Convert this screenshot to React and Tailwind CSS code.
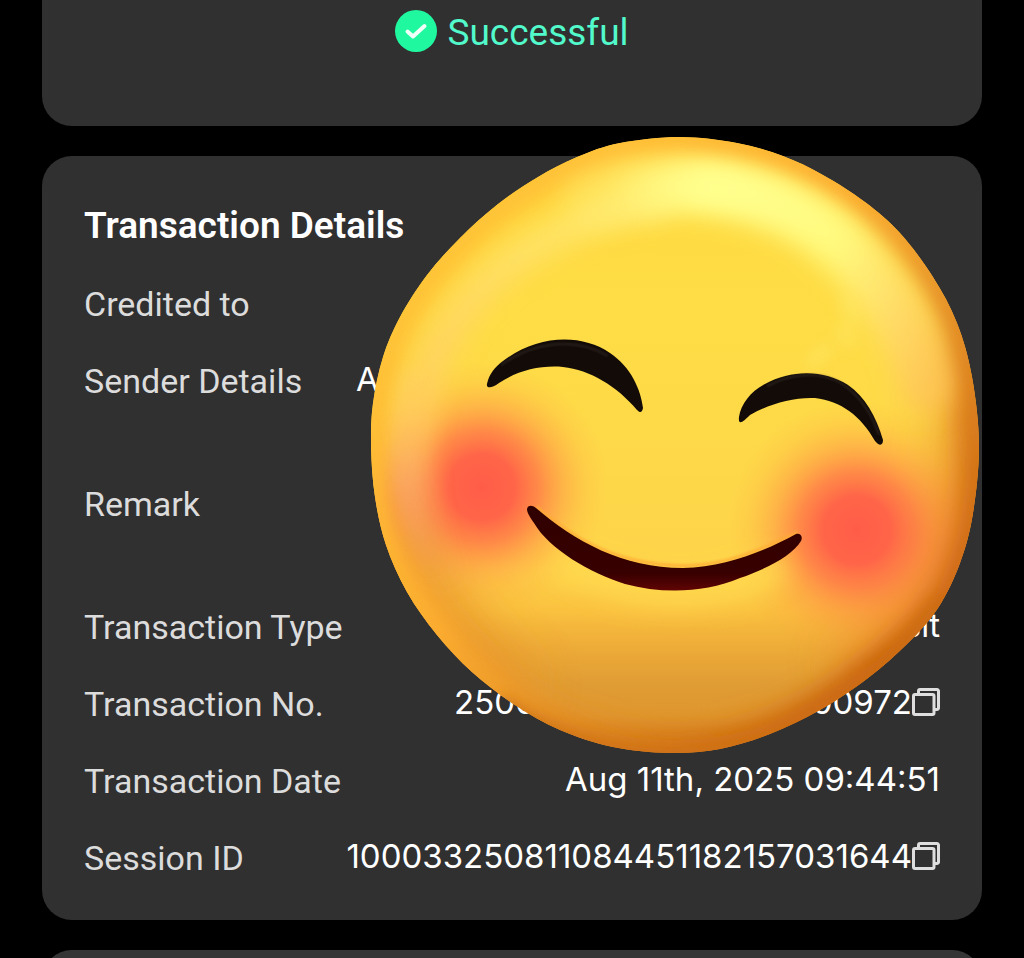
import React from 'react';

/* ---------- data ---------- */
const rows = [
  { label: 'Credited to', value: '' },
  { label: 'Sender Details', value: 'A', tall: true, wide: true },
  { label: 'Remark', value: '', tall: true },
  { label: 'Transaction Type', value: 'Deposit' },
  { label: 'Transaction No.', parts: ['2500', '00972'], copy: true },
  { label: 'Transaction Date', value: 'Aug 11th, 2025 09:44:51' },
  { label: 'Session ID', value: '100033250811084451182157031644', copy: true },
];

/* ---------- icons ---------- */
function CheckBadge() {
  return (
    <svg className="size-[42px]" viewBox="0 0 42 42" fill="none" aria-hidden="true">
      <circle cx="21" cy="21" r="21" fill="#20f8a0" />
      <path d="M12.5 21.5l5.5 5L29.500 16" stroke="#f0fff8" strokeWidth="4" strokeLinecap="round" strokeLinejoin="round" />
    </svg>
  );
}

function CopyIcon() {
  return (
    <svg className="size-7" viewBox="0 0 28 28" fill="none" stroke="#dedede" strokeWidth="3" strokeLinejoin="round" aria-hidden="true">
      <rect x="1.500" y="6.500" width="20.500" height="20" rx="1.500" />
      <path d="M6.500 6.500V3a1.500 1.500 0 0 1 1.500-1.500H25A1.500 1.500 0 0 1 26.500 3v17A1.500 1.500 0 0 1 25 21.500h-3" />
    </svg>
  );
}

/* ---------- sticker ---------- */
const outline = [
  [680, 137], [737, 143], [783, 156], [823, 175], [865, 202], [900, 233], [933, 277], [957, 323],
  [972, 377], [979, 445], [973, 513], [960, 563], [938, 608], [908, 643], [868, 678], [820, 710],
  [770, 734], [720, 749], [670, 753], [613, 747], [560, 730], [515, 705], [472, 672], [437, 635],
  [407, 592], [386, 545], [375, 497], [371, 447], [373, 403], [383, 357], [400, 317], [427, 275],
  [460, 238], [498, 204], [538, 177], [577, 157], [620, 143],
];

// closed smooth curve through the points
const smooth = (pts) => {
  const n = pts.length;
  const at = (i) => pts[(i + n) % n];
  let d = `M${pts[0].join(' ')}`;
  for (let i = 0; i < n; i++) {
    const [a, b, c, e] = [at(i - 1), at(i), at(i + 1), at(i + 2)];
    d += `C${b[0] + (c[0] - a[0]) / 6} ${b[1] + (c[1] - a[1]) / 6} ${c[0] - (e[0] - b[0]) / 6} ${c[1] - (e[1] - b[1]) / 6} ${c[0]} ${c[1]}`;
  }
  return d + 'Z';
};

const FACE = smooth(outline);

function Blur({ id, size }) {
  return (
    <filter id={id} filterUnits="userSpaceOnUse" x="271" y="36" width="808" height="818">
      <feGaussianBlur stdDeviation={size} />
    </filter>
  );
}

function SmileSticker() {
  return (
    <svg className="absolute -top-5 right-[3px] w-[608px] h-[618px]" viewBox="371 136 608 618" role="img" aria-label="Smiling face">
      <defs>
        <clipPath id="face"><path d={FACE} /></clipPath>
        <linearGradient id="base" x1="0" y1="0" x2="0" y2="1">
          <stop offset="0" stopColor="#ffd93f" />
          <stop offset="0.3" stopColor="#fedd46" />
          <stop offset="0.7" stopColor="#fed44a" />
          <stop offset="0.77" stopColor="#fac03f" />
          <stop offset="0.83" stopColor="#edab38" />
          <stop offset="0.89" stopColor="#e09c34" />
          <stop offset="0.94" stopColor="#df962e" />
          <stop offset="1" stopColor="#d07815" />
        </linearGradient>
        <linearGradient id="rim" x1="0.1" y1="0.2" x2="0.85" y2="0.9">
          <stop offset="0" stopColor="#ffc439" />
          <stop offset="0.4" stopColor="#fdae30" />
          <stop offset="0.6" stopColor="#ea972a" />
          <stop offset="1" stopColor="#c8620f" />
        </linearGradient>
        <radialGradient id="cheek">
          <stop offset="0" stopColor="#ff5c48" />
          <stop offset="0.26" stopColor="#ff5f48" stopOpacity="0.95" />
          <stop offset="0.45" stopColor="#ff6d47" stopOpacity="0.72" />
          <stop offset="0.64" stopColor="#ff8044" stopOpacity="0.4" />
          <stop offset="0.83" stopColor="#ff9640" stopOpacity="0.15" />
          <stop offset="1" stopColor="#ffa040" stopOpacity="0" />
        </radialGradient>
        <linearGradient id="gloss" gradientUnits="userSpaceOnUse" x1="560" y1="200" x2="940" y2="370">
          <stop offset="0" stopColor="#ffe468" stopOpacity="0.4" />
          <stop offset="0.3" stopColor="#ffff8c" />
          <stop offset="0.65" stopColor="#fff97c" />
          <stop offset="0.85" stopColor="#ffdb66" />
          <stop offset="1" stopColor="#ffc458" stopOpacity="0.8" />
        </linearGradient>
        <linearGradient id="shine" gradientUnits="userSpaceOnUse" x1="610" y1="0" x2="870" y2="0">
          <stop offset="0" stopColor="#ffff8e" stopOpacity="0" />
          <stop offset="0.4" stopColor="#ffff8e" />
          <stop offset="1" stopColor="#ffff8e" stopOpacity="0" />
        </linearGradient>
        <linearGradient id="crescent" gradientUnits="userSpaceOnUse" x1="0" y1="190" x2="0" y2="590">
          <stop offset="0" stopColor="#ffec70" />
          <stop offset="0.3" stopColor="#ffd866" />
          <stop offset="0.55" stopColor="#ffcb62" />
          <stop offset="0.75" stopColor="#fba568" />
          <stop offset="1" stopColor="#eda050" stopOpacity="0" />
        </linearGradient>
        <linearGradient id="lips" x1="0" y1="0" x2="0" y2="1">
          <stop offset="0" stopColor="#300000" />
          <stop offset="0.8" stopColor="#380000" />
          <stop offset="1" stopColor="#600404" />
        </linearGradient>
        <Blur id="b1" size="1" />
        <Blur id="b7" size="7" />
        <Blur id="b12" size="12" />
        <Blur id="b24" size="24" />
      </defs>
      <g clipPath="url(#face)">
        <path d={FACE} fill="url(#base)" />
        {/* shade on the sides */}
        <path d="M985 330C995 480 950 610 860 700" fill="none" stroke="#e98a2c" strokeWidth="86" opacity="0.8" filter="url(#b24)" />
        <path d="M372 480C385 570 430 650 510 715" fill="none" stroke="#e69429" strokeWidth="90" opacity="0.9" filter="url(#b24)" />
        <path d={FACE} fill="none" stroke="url(#rim)" strokeWidth="40" filter="url(#b12)" />
        {/* cheeks */}
        <circle cx="482" cy="487" r="126" fill="url(#cheek)" />
        <circle cx="857" cy="530" r="130" fill="url(#cheek)" />
        {/* light bands */}
        <path d="M660 204C580 214 496 256 452 326C410 390 400 480 424 540C430 556 438 570 448 584" fill="none" stroke="url(#crescent)" strokeWidth="32" strokeLinecap="round" opacity="0.85" filter="url(#b12)" />
        <path d="M410 370C402 400 399 430 402 470C406 510 418 540 432 565" fill="none" stroke="url(#crescent)" strokeWidth="14" opacity="0.5" filter="url(#b7)" />
        <path d="M590 198C700 164 810 200 862 266C897 308 917 342 926 384" fill="none" stroke="url(#gloss)" strokeWidth="56" strokeLinecap="round" filter="url(#b12)" />
        <path d="M620 190C720 170 810 200 870 262" fill="none" stroke="url(#shine)" strokeWidth="24" filter="url(#b12)" />
        <path d="M846 300L852 320M842 330L850 342M826 350L812 362" fill="none" stroke="#fff07a" strokeWidth="12" strokeLinecap="round" opacity="0.35" filter="url(#b7)" />
        {/* thin edge */}
        <path d={FACE} fill="none" stroke="url(#rim)" strokeWidth="12" opacity="0.7" filter="url(#b7)" />
        <path d="M500 705C600 775 760 770 850 702C890 672 920 640 940 605" fill="none" stroke="#cd6f12" strokeWidth="22" opacity="0.8" filter="url(#b7)" />
        {/* soft light below the mouth */}
        <path d="M560 560C640 604 715 602 780 566" fill="none" stroke="#ffd950" strokeWidth="28" opacity="0.9" filter="url(#b12)" />
      </g>
      <path d="M487 384C489 374 495 367 503 361C537 335 581 333 610 353C631 367 641 390 643 408C642 413 640 413 637 410C617 386 590 370 563 367C540 365 517 371 499 383C491 389 486 388 487 384Z" fill="#120b08" />
      <path d="M739 417C741 404 751 391 765 384C792 369 825 370 848 385C865 397 876 416 883 440C883 446 879 446 875 441C861 416 841 401 815 398C793 397 769 404 750 415C743 422 738 426 739 417Z" fill="#120b08" />
      <path d="M501 365C530 344 572 335 608 356M767 386C797 371 828 371 849 389C862 400 873 417 879 435" fill="none" stroke="#3a302c" strokeWidth="2" opacity="0.6" filter="url(#b1)" />
      <path d="M536 507C578 543 620 565 684 566C731 566 768 546 798 532" fill="none" stroke="#ffac35" strokeWidth="4" opacity="0.7" filter="url(#b1)" />
      <path d="M527 509C528 505 532 505 536 508C574 541 623 568 683 568C727 567 767 550 796 534C801 533 803 537 801 541C792 556 766 569 740 578C705 593 662 594 625 584C590 573 549 549 534 523C529 516 527 512 527 509Z" fill="url(#lips)" />
    </svg>
  );
}

/* ---------- one label / value line ---------- */
function DetailRow({ row }) {
  return (
    <div className={row.tall ? 'flex items-start justify-between min-h-[92px]' : 'flex items-start justify-between'}>
      <dt className="leading-[46px] text-[#dcdcdc]">{row.label}</dt>
      <dd className={row.wide ? 'w-[584px] font-[Inter] text-[33px] leading-[42px] text-white' : 'flex items-center font-[Inter] text-[33px] leading-[42px] text-white'}>
        {row.parts ? (
          <span className="flex justify-between w-[458px]">
            {row.parts.map((p) => <span key={p}>{p}</span>)}
          </span>
        ) : row.value}
        {row.copy && (
          <button type="button" aria-label={`Copy ${row.label}`}>
            <CopyIcon />
          </button>
        )}
      </dd>
    </div>
  );
}

export default function App() {
  return (
    <main className="flex h-screen flex-col gap-[30px] overflow-y-auto bg-black px-[42px] font-[Roboto,sans-serif] [scrollbar-width:none]">
      <section className="flex shrink-0 justify-center rounded-b-[30px] bg-[#303030] pt-[10px] pb-[74px]">
        <p className="flex h-[42px] items-center gap-[10px] text-[37px] text-[#52f9cb]">
          <CheckBadge />
          <span className="pt-1">Successful</span>
        </p>
      </section>

      <section className="relative shrink-0 rounded-[30px] bg-[#303030] px-[42px] pt-[47px] pb-[39px]">
        <h2 className="text-[37px] leading-[46px] font-semibold text-white">Transaction Details</h2>
        <dl className="mt-8 flex flex-col gap-[31px] text-[34px]">
          {rows.map((row) => <DetailRow key={row.label} row={row} />)}
        </dl>
        <SmileSticker />
      </section>

      <section className="h-40 shrink-0 rounded-[30px] bg-[#353535]" />
    </main>
  );
}
